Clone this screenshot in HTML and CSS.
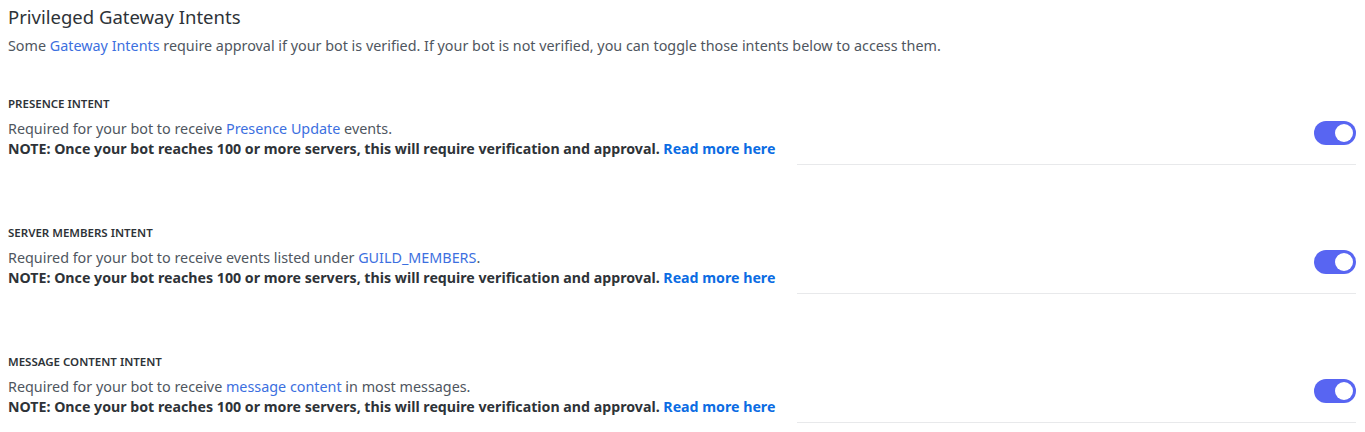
FILE: index.html
```html
<!DOCTYPE html>
<html>
<head>
<meta charset="utf-8">
<link rel="stylesheet" href="styles.css">
</head>
<body>
<div class="page">
  <h2 class="title">Privileged Gateway Intents</h2>
  <p class="intro">Some <a class="link">Gateway Intents</a> require approval if your bot is verified. If your bot is not verified, you can toggle those intents below to access them.</p>

  <section class="intent">
    <h3 class="label">PRESENCE INTENT</h3>
    <div class="row">
      <div class="text">
        <div class="desc">Required for your bot to receive <a class="link">Presence Update</a> events.</div>
        <div class="note">NOTE: Once your bot reaches 100 or more servers, this will require verification and approval. <a class="more">Read more here</a></div>
      </div>
      <div class="toggle"><span class="knob"></span></div>
    </div>
    <div class="divider"></div>
  </section>

  <section class="intent">
    <h3 class="label">SERVER MEMBERS INTENT</h3>
    <div class="row">
      <div class="text">
        <div class="desc">Required for your bot to receive events listed under <a class="link">GUILD_MEMBERS</a>.</div>
        <div class="note">NOTE: Once your bot reaches 100 or more servers, this will require verification and approval. <a class="more">Read more here</a></div>
      </div>
      <div class="toggle"><span class="knob"></span></div>
    </div>
    <div class="divider"></div>
  </section>

  <section class="intent">
    <h3 class="label">MESSAGE CONTENT INTENT</h3>
    <div class="row">
      <div class="text">
        <div class="desc">Required for your bot to receive <a class="link">message content</a> in most messages.</div>
        <div class="note">NOTE: Once your bot reaches 100 or more servers, this will require verification and approval. <a class="more">Read more here</a></div>
      </div>
      <div class="toggle"><span class="knob"></span></div>
    </div>
    <div class="divider"></div>
  </section>
</div>
</body>
</html>
```

FILE: styles.css
```css
* { box-sizing: border-box; }
html, body { margin: 0; padding: 0; background: #ffffff; }
body { font-family: "Noto Sans", "Open Sans", sans-serif; color: #4f5660; }
.page { padding: 4px 9px 0 8px; }
.title {
  margin: 0;
  font-size: 18.5px;
  font-weight: 400;
  line-height: 26px;
  color: #2e3338;
}
.intro {
  margin: 6px 0 0 0;
  font-size: 14.35px;
  line-height: 20px;
  color: #4f5660;
}
.link { color: #3c6fe0; text-decoration: none; }
.intent { margin-top: 40px; }
.intent + .intent { margin-top: 60px; }
.label {
  margin: 0;
  font-size: 11.5px;
  font-weight: 600;
  line-height: 16px;
  color: #2e3338;
}
.row {
  display: flex;
  justify-content: space-between;
  align-items: flex-start;
  margin-top: 7px;
}
.desc { font-size: 14.35px; line-height: 20px; color: #4f5660; }
.note { font-size: 14.2px; line-height: 20px; font-weight: 700; color: #2e3338; }
.more { color: #0b6ce3; text-decoration: none; }
.toggle {
  width: 42px;
  height: 24px;
  border-radius: 12px;
  background: #5865f2;
  position: relative;
  margin-top: 2px;
}
.knob {
  position: absolute;
  right: 3px;
  top: 3px;
  width: 18px;
  height: 18px;
  border-radius: 50%;
  background: #ffffff;
}
.divider {
  margin: 5px 0 0 789px;
  height: 1px;
  background: #e8e9eb;
}
```
